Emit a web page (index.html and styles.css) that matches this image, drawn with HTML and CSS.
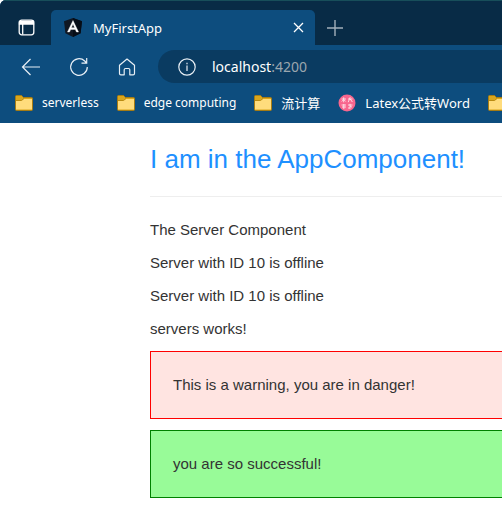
FILE: index.html
```html
<!DOCTYPE html>
<html lang="en">
<head>
<meta charset="utf-8">
<title>MyFirstApp</title>
<link rel="stylesheet" href="styles.css">
</head>
<body>
<svg class="defs" aria-hidden="true">
  <symbol id="folder" viewBox="0 0 18 16">
    <path d="M.5 1.5q0-1 1-1h5l2 2h8q1 0 1 1v11q0 1-1 1h-15q-1 0-1-1z" fill="#d9a61c" stroke="#a67c14"/>
    <path d="M1 5.5h5.5l2-1.5H17v10.5H1z" fill="#ffdc7c"/>
    <path d="M1 5.500h5.500l2.500-2" fill="none" stroke="#b98b12"/>
  </symbol>
</svg>
<header class="browser">
  <div class="tabstrip">
    <button class="tab-actions" aria-label="Tab actions">
      <svg width="17" height="17" viewBox="0 0 17 17" fill="none" stroke="#fff" stroke-width="1.3"><rect x="1.2" y="1.2" width="14.6" height="14.6" rx="2.5"/><path d="M1.5 2.5h14v2.5h-14z" fill="#fff"/><path d="M4.700 5v10.500"/></svg>
    </button>
    <div class="tab">
      <svg width="18" height="19" viewBox="0 0 18 19"><path d="M9 0l9 3.200-1.400 12L9 19l-7.600-3.800L0 3.200z" fill="#101722"/><path d="M9 0l9 3.200-1.400 12L9 19z" fill="#060d17"/><path d="M9 2.500L3.500 14h2l1.200-2.600h4.600l1.200 2.600h2zM9 6l1.600 3.700H7.400z" fill="#fff" stroke="#fff" stroke-width=".4" fill-rule="evenodd"/></svg>
      <span class="tab-title">MyFirstApp</span>
      <button class="close" aria-label="Close tab"><svg width="11" height="11" viewBox="0 0 11 11" stroke="#fff" stroke-width="1.3"><path d="M1 1l9 9M10 1l-9 9"/></svg></button>
    </div>
    <button class="new-tab" aria-label="New tab"><svg width="16" height="16" viewBox="0 0 16 16" stroke="#a3b0bb" stroke-width="1.400"><path d="M8 0v16M0 8h16"/></svg></button>
  </div>
  <div class="toolbar">
    <button aria-label="Back"><svg width="20" height="18" viewBox="0 0 20 18" fill="none" stroke="#e8eff5" stroke-width="1.200"><path d="M9.500 1L1.500 9l8 8M1.500 9H19"/></svg></button>
    <button aria-label="Refresh"><svg width="20" height="20" viewBox="0 0 20 20" fill="none" stroke="#e8eff5" stroke-width="1.200"><path d="M18.300 10a8.300 8.300 0 1 1-2.600-6l2 2M17.700 1v5.200h-5.200"/></svg></button>
    <button aria-label="Home"><svg width="18" height="18" viewBox="0 0 18 18" fill="none" stroke="#e8eff5" stroke-width="1.200" stroke-linejoin="round"><path d="M1.500 7.300L9 1l7.500 6.300v8.200q0 1.300-1.300 1.300h-3.400v-5q0-1.300-1.300-1.300h-3q-1.300 0-1.300 1.300v5H2.800q-1.300 0-1.300-1.300z"/></svg></button>
    <div class="address">
      <svg width="18" height="18" viewBox="0 0 18 18" fill="none" stroke="#e8eff5" stroke-width="1.200"><circle cx="9" cy="9" r="8.200"/><path d="M9 7.600v5.400M9 4.800v1.400"/></svg>
      <span class="url">localhost<span class="port">:4200</span></span>
    </div>
  </div>
  <nav class="bookmarks">
    <a href="#"><svg class="icon"><use href="#folder"/></svg>serverless</a>
    <a href="#"><svg class="icon"><use href="#folder"/></svg>edge computing</a>
    <a href="#" lang="zh"><svg class="icon"><use href="#folder"/></svg>流计算</a>
    <a href="#" lang="zh"><svg class="icon round" viewBox="0 0 18 18"><circle cx="9" cy="9" r="8.500" fill="#f8668e"/><g fill="none" stroke="#ffe6ed" stroke-width=".9"><path d="M3.500 5h4.500M5.700 3.300v5M3.800 7.500l1.900-2 2 2M10 5h4.500M12.200 3.200l-2 5M12.200 5l2.200 3M3.500 11h4.500M4 13h4M5.800 10v5M10 11h4.500M12 9.800v5M12 12l2 1.200M10 14h2"/></g></svg>Latex公式转Word</a>
    <a href="#" aria-label="More bookmarks"><svg class="icon"><use href="#folder"/></svg></a>
  </nav>
</header>
<main class="container">
  <h3>I am in the AppComponent!</h3>
  <hr>
  <p>The Server Component</p>
  <p>Server with ID 10 is offline</p>
  <p>Server with ID 10 is offline</p>
  <p>servers works!</p>
  <div class="alert warning">This is a warning, you are in danger!</div>
  <div class="alert success">you are so successful!</div>
</main>
</body>
</html>
```
FILE: styles.css
```css
* { box-sizing: border-box; }
html { background: #fff; }
body {
  margin: 0;
  overflow-x: hidden;
  color: #333;
  font: 15px/22px "Liberation Sans", Arial, sans-serif;
}
svg { display: block; flex: none; }
.defs { display: none; }
button { display: grid; place-items: center; flex: none; padding: 0; border: 0; background: none; }
.browser {
  overflow: hidden;
  border-top-left-radius: 6px;
  background: #0d4d7e;
  color: #fff;
  font: 13px/20px "Noto Sans", "Noto Sans CJK SC", sans-serif;
}
.tabstrip {
  display: flex;
  height: 45px;
  padding-top: 9px;
  border-top: 1px solid #174e5a;
  background: #082b46;
}
.tab-actions { width: 52px; margin-right: -1px; border-bottom-right-radius: 5px; }
.tab {
  display: flex;
  align-items: center;
  width: 264px;
  padding: 0 11px 0 13px;
  border-radius: 5px 5px 0 0;
  background: #0d4d7e;
}
.tab-title { flex: 1; margin-left: 11px; }
.close { width: 11px; height: 20px; }
.new-tab { width: 40px; }
.toolbar { display: flex; align-items: center; padding-top: 5px; padding-left: 7px; }
.toolbar button { width: 48px; height: 32px; }
.address {
  display: flex;
  flex: 1;
  align-items: center;
  gap: 16px;
  height: 33px;
  margin-left: 7px;
  padding-left: 20px;
  border-radius: 17px 0 0 17px;
  background: #0a3b61;
}
.url { font-size: 14px; }
.port { color: #9aa6ae; }
.bookmarks { display: flex; gap: 18px; height: 40px; padding-left: 15px; font-size: 12px; }
.bookmarks a {
  display: flex;
  flex: none;
  align-items: center;
  gap: 9px;
  color: inherit;
  text-decoration: none;
  white-space: nowrap;
}
.bookmarks :lang(zh) { font-size: 13px; }
.icon { width: 18px; height: 16px; }
.round { height: 18px; }
.container { margin-left: 150px; }
h3 { margin: 0; padding-top: 22px; color: #1e90ff; font-size: 26px; font-weight: 400; line-height: 29px; }
hr { margin: 22px 0; border: 0; border-top: 1px solid #eee; }
p { margin: 0 0 11px; }
.alert { margin-bottom: 11px; padding: 22px; border: 1px solid; border-right: 0; }
.warning { border-color: red; background: #ffe4e1; }
.success { border-color: green; background: #98fb98; }
```
